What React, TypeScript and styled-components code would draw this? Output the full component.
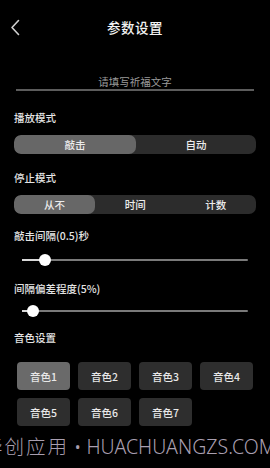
import React, { useState } from "react";
import styled, { createGlobalStyle } from "styled-components";

const Global = createGlobalStyle`
  html, body { margin: 0; padding: 0; background: #000; }
  body {
    font-family: "Noto Sans CJK SC", "Noto Sans", sans-serif;
    color: #e6e6e6;
  }
  * { box-sizing: border-box; }
`;

const Page = styled.div`
  position: relative;
  width: 270px;
  height: 468px;
  overflow: hidden;
  background: #000;
  display: flex;
  flex-direction: column;
`;

const Header = styled.div`
  height: 54px;
  display: grid;
  grid-template-columns: 40px 1fr 40px;
  align-items: center;
`;

const Back = styled.div`
  display: flex;
  align-items: center;
  padding-left: 10px;
  height: 100%;
`;

const Title = styled.div`
  text-align: center;
  font-size: 13.5px;
  font-weight: 500;
  color: #f2f2f2;
  letter-spacing: 0.5px;
`;

const InputBox = styled.div`
  margin: 20px 16px 0;
  height: 17px;
  line-height: 16px;
  text-align: center;
  font-size: 10.5px;
  color: #9a9a9a;
  border-bottom: 2px solid #5c5c5c;
`;

const Body = styled.div`
  padding: 0 14px;
  display: flex;
  flex-direction: column;
`;

const Label = styled.div<{ $mt: number }>`
  margin-top: ${(p) => p.$mt}px;
  height: 16px;
  line-height: 16px;
  font-size: 10.5px;
  font-weight: 500;
  color: #e4e4e4;
`;

const Segmented = styled.div<{ $mt: number; $cols: number; $selW: number }>`
  margin-top: ${(p) => p.$mt}px;
  height: 19px;
  border-radius: 7px;
  background: #2c2c2c;
  display: grid;
  grid-template-columns: ${(p) => `${p.$selW}px repeat(${p.$cols - 1}, 1fr)`};
  overflow: hidden;
`;

const Seg = styled.div<{ $active?: boolean }>`
  display: flex;
  align-items: center;
  justify-content: center;
  font-size: 10.5px;
  font-weight: 500;
  color: #ececec;
  background: ${(p) => (p.$active ? "#676767" : "transparent")};
  border-radius: 7px;
`;

const SliderWrap = styled.div<{ $mt: number }>`
  margin: ${(p) => p.$mt}px 8px 0;
  height: 24px;
  position: relative;
  display: flex;
  align-items: center;
`;

const Track = styled.div`
  flex: 1;
  height: 2px;
  background: #7a7a7a;
  border-radius: 1px;
  position: relative;
`;

const Fill = styled.div`
  position: absolute;
  left: 0;
  top: 0;
  height: 2px;
  background: #d8d8d8;
`;

const Thumb = styled.div`
  position: absolute;
  top: 50%;
  width: 12px;
  height: 12px;
  margin: -6px 0 0 -6px;
  border-radius: 50%;
  background: #fff;
`;

const Grid = styled.div`
  margin: 16px 0 0 3px;
  display: grid;
  grid-template-columns: repeat(4, 53px);
  grid-auto-rows: 28px;
  gap: 8px;
`;

const ToneBtn = styled.div<{ $active?: boolean }>`
  border-radius: 4px;
  background: ${(p) => (p.$active ? "#6a6a6a" : "#2e2e2e")};
  display: flex;
  align-items: center;
  justify-content: center;
  font-size: 10.5px;
  font-weight: 500;
  color: #e8e8e8;
`;

const Watermark = styled.div`
  position: absolute;
  left: -17px;
  top: 432px;
  white-space: nowrap;
  font-family: "Noto Sans", "Noto Sans CJK SC", sans-serif;
  font-weight: 300;
  font-size: 19.5px;
  line-height: 28px;
  color: #a99fb0;
`;

const Cjk = styled.span`
  font-family: "Noto Sans CJK SC", sans-serif;
  letter-spacing: 2px;
`;

function Slider({ value, mt }: { value: number; mt: number }) {
  return (
    <SliderWrap $mt={mt}>
      <Track>
        <Fill style={{ width: `${value}%` }} />
        <Thumb style={{ left: `${value}%` }} />
      </Track>
    </SliderWrap>
  );
}

export default function App() {
  const [play, setPlay] = useState(0);
  const [stop, setStop] = useState(0);
  const [tone, setTone] = useState(0);
  const tones = ["音色1", "音色2", "音色3", "音色4", "音色5", "音色6", "音色7"];
  return (
    <>
      <Global />
      <Page>
        <Header>
          <Back>
            <svg width="10" height="17" viewBox="0 0 10 17">
              <path d="M8.5 1.5 L2 8.5 L8.5 15.5" fill="none" stroke="#cfcfcf" strokeWidth="1.6" strokeLinecap="round" strokeLinejoin="round" />
            </svg>
          </Back>
          <Title>参数设置</Title>
          <div />
        </Header>
        <InputBox>请填写祈福文字</InputBox>
        <Body>
          <Label $mt={19}>播放模式</Label>
          <Segmented $mt={9} $cols={2} $selW={122}>
            {["敲击", "自动"].map((t, i) => (
              <Seg key={t} $active={play === i} onClick={() => setPlay(i)}>{t}</Seg>
            ))}
          </Segmented>
          <Label $mt={16}>停止模式</Label>
          <Segmented $mt={9} $cols={3} $selW={81}>
            {["从不", "时间", "计数"].map((t, i) => (
              <Seg key={t} $active={stop === i} onClick={() => setStop(i)}>{t}</Seg>
            ))}
          </Segmented>
          <Label $mt={14}>敲击间隔(0.5)秒</Label>
          <Slider value={10} mt={4} />
          <Label $mt={9}>间隔偏差程度(5%)</Label>
          <Slider value={5} mt={2} />
          <Label $mt={7}>音色设置</Label>
          <Grid>
            {tones.map((t, i) => (
              <ToneBtn key={t} $active={tone === i} onClick={() => setTone(i)}>{t}</ToneBtn>
            ))}
          </Grid>
        </Body>
        <Watermark>
          <Cjk>华创应用</Cjk> • HUACHUANGZS.COM
        </Watermark>
      </Page>
    </>
  );
}
